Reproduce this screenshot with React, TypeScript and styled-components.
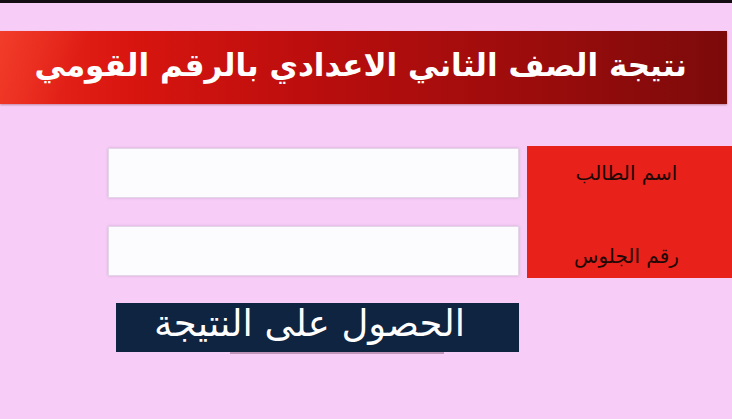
import React from "react";
import styled, { createGlobalStyle } from "styled-components";

const Global = createGlobalStyle`
  html, body {
    margin: 0;
    padding: 0;
    background: #f7cdf7;
  }
  #root {
    width: 732px;
    height: 419px;
    overflow: hidden;
  }
`;

const Page = styled.div`
  width: 732px;
  height: 419px;
  background: #f7cdf7;
  display: flex;
  flex-direction: column;
`;

const TopStrip = styled.div`
  height: 3px;
  background: #140c12;
`;

const Banner = styled.header`
  margin-top: 28px;
  margin-right: 5px;
  height: 73px;
  background:
    linear-gradient(115deg, rgba(255,90,60,0.4) 0%, rgba(255,80,60,0) 12%),
    linear-gradient(90deg, #ea2a1e 0%, #d8150f 18%, #b80d0d 45%, #9a0c0c 75%, #7c0a0a 100%);
  display: flex;
  align-items: center;
  justify-content: flex-end;
  padding-right: 40px;
  box-shadow: 0 1px 2px rgba(90, 0, 0, 0.35);
`;

const Title = styled.h1`
  margin: 0 0 4px;
  direction: rtl;
  color: #ffffff;
  font-family: "DejaVu Sans", "Noto Sans", sans-serif;
  font-weight: bold;
  font-size: 31px;
  line-height: 1;
`;

const FormArea = styled.section`
  margin-top: 42px;
  display: flex;
  align-items: flex-start;
  padding-left: 108px;
`;

const Fields = styled.div`
  width: 411px;
  display: flex;
  flex-direction: column;
  gap: 28px;
  padding-top: 2px;
`;

const Field = styled.input`
  box-sizing: border-box;
  width: 411px;
  height: 50px;
  border: 1px solid #e3d6e6;
  border-radius: 1px;
  background: #fcfbfd;
  box-shadow: 0 0 3px rgba(180, 150, 190, 0.6);
  outline: none;
`;

const LabelBox = styled.div`
  margin-left: 8px;
  width: 205px;
  height: 132px;
  background: #e8211a;
  display: flex;
  flex-direction: column;
  align-items: center;
  justify-content: space-between;
  padding: 13px 0 8px;
  box-sizing: border-box;
`;

const Label = styled.label`
  direction: rtl;
  color: #200806;
  font-family: "DejaVu Serif", "Liberation Serif", "DejaVu Sans", serif;
  font-size: 20px;
  line-height: 28px;
  margin-right: 6px;
`;

const SubmitRow = styled.div`
  margin-top: 25px;
  padding-left: 116px;
`;

const SubmitButton = styled.button`
  position: relative;
  width: 403px;
  height: 49px;
  border: none;
  background: #0f2440;
  color: #ffffff;
  font-family: "DejaVu Sans", "Noto Sans", sans-serif;
  font-size: 37px;
  line-height: 1;
  direction: rtl;
  padding: 0 54px 8px 0;
  text-align: right;
  cursor: pointer;
  &::after {
    content: "";
    position: absolute;
    left: 114px;
    width: 214px;
    bottom: -2px;
    height: 2px;
    background: rgba(90, 40, 70, 0.35);
  }
`;

export default function App() {
  return (
    <Page>
      <Global />
      <TopStrip />
      <Banner>
        <Title>نتيجة الصف الثاني الاعدادي بالرقم القومي</Title>
      </Banner>
      <FormArea>
        <Fields>
          <Field type="text" aria-label="اسم الطالب" />
          <Field type="text" aria-label="رقم الجلوس" />
        </Fields>
        <LabelBox>
          <Label>اسم الطالب</Label>
          <Label>رقم الجلوس</Label>
        </LabelBox>
      </FormArea>
      <SubmitRow>
        <SubmitButton type="button">الحصول على النتيجة</SubmitButton>
      </SubmitRow>
    </Page>
  );
}
